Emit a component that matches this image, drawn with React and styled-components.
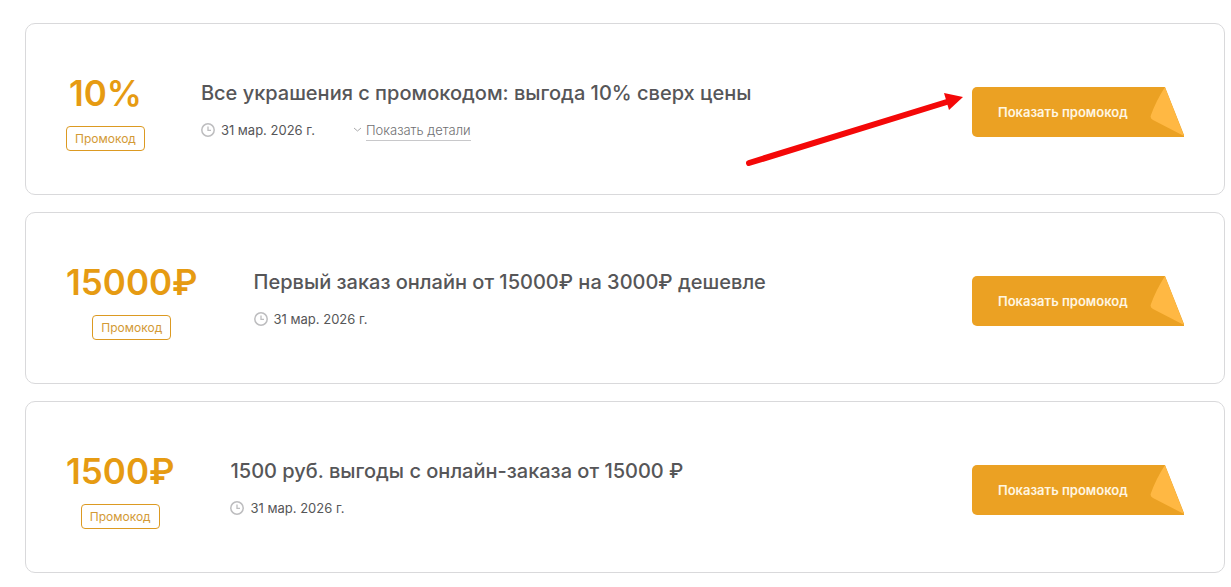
import React from "react";
import styled, { createGlobalStyle } from "styled-components";

const GlobalStyle = createGlobalStyle`
  *,
  *::before,
  *::after {
    box-sizing: border-box;
  }

  body {
    margin: 0;
    background: #fff;
    color: #565658;
    font-family: Inter, "Noto Sans", sans-serif;
  }
`;

const CouponList = styled.main`
  display: flex;
  flex-direction: column;
  gap: 17px;
  padding: 23px 6px 14px 25px;
`;

const Card = styled.article`
  position: relative;
  display: flex;
  align-items: flex-start;
  padding: 50px 40px 43px;
  border: 1px solid #d9d9db;
  border-radius: 10px;
`;

const Discount = styled.div`
  display: flex;
  flex: none;
  flex-direction: column;
  align-items: center;
  gap: 14px;
  margin-right: 56px;
`;

const Amount = styled.div`
  color: #e69b12;
  font-size: 35px;
  font-weight: 600;
  line-height: 38px;
`;

const Badge = styled.span`
  padding: 0 8px;
  border: 1px solid #dc9a22;
  border-radius: 4px;
  color: #d39a35;
  font-size: 12px;
  line-height: 23px;
`;

const Info = styled.div`
  display: flex;
  flex: 1;
  flex-direction: column;
  gap: 12px;
  padding-top: 5px;
`;

const Title = styled.h2`
  margin: 0;
  font-size: 20px;
  font-weight: 500;
  line-height: 28px;
`;

const Meta = styled.div`
  display: flex;
  align-items: center;
  gap: 38px;
  height: 22px;
  font-size: 13px;
  line-height: 20px;
`;

const Expiry = styled.span`
  display: flex;
  align-items: center;
  gap: 6px;
`;

const DetailsButton = styled.button`
  display: flex;
  align-items: center;
  gap: 4px;
  padding: 0;
  border: 0;
  background: none;
  color: #6f6f72;
  font: inherit;
  font-weight: 300;
  cursor: pointer;

  span {
    border-bottom: 1px solid #c8c8ca;
  }
`;

const PromoButton = styled.button`
  display: flex;
  flex: none;
  align-items: center;
  justify-content: space-between;
  width: 212px;
  height: 50px;
  margin-top: 13px;
  padding: 0 0 0 26px;
  overflow: hidden;
  border: 0;
  border-radius: 5px 0 0 5px;
  background: #eba123;
  color: #fff6e2;
  font: inherit;
  font-size: 13px;
  font-weight: 600;
  clip-path: polygon(0 0, calc(100% - 19px) 0, 100% calc(100% - 2px), 100% 100%, 0 100%);
  cursor: pointer;
`;

const Pointer = styled.svg`
  position: absolute;
  top: 66px;
  right: 258px;
  pointer-events: none;
`;

const ClockIcon = () => (
  <svg width="14" height="14" viewBox="0 0 14 14" fill="none" stroke="#bdbdbf">
    <circle cx="7" cy="7" r="6.2" strokeWidth="1.5" />
    <path d="M7 3.4v4h3" strokeWidth="1.3" />
  </svg>
);

const ChevronIcon = () => (
  <svg width="9" height="6" viewBox="0 0 9 6" fill="none" stroke="#aaaaac">
    <path d="M1 1l3.5 3L8 1" />
  </svg>
);

const FoldedCorner = () => (
  <svg width="34" height="50" viewBox="0 0 34 50">
    <path d="M15 0L34 49L3 33Q-.5 31 1 28Q6 14 15 0Z" fill="#ffb843" />
  </svg>
);

const PointerArrow = () => (
  <Pointer width="222" height="80" viewBox="0 0 222 80" aria-hidden="true">
    <path d="M5 73L206 11" stroke="#f40808" strokeWidth="6" strokeLinecap="round" />
    <path d="M200 3L219 7L205 20Z" fill="#f40808" />
  </Pointer>
);

const coupons = [
  {
    amount: "10%",
    title: "Все украшения с промокодом: выгода 10% сверх цены",
    expires: "31 мар. 2026 г.",
    hasDetails: true,
    highlighted: true,
  },
  {
    amount: "15000₽",
    title: "Первый заказ онлайн от 15000₽ на 3000₽ дешевле",
    expires: "31 мар. 2026 г.",
  },
  {
    amount: "1500₽",
    title: "1500 руб. выгоды с онлайн-заказа от 15000 ₽",
    expires: "31 мар. 2026 г.",
  },
];

const Coupon = ({ amount, title, expires, hasDetails, highlighted }) => {
  return (
    <Card>
      <Discount>
        <Amount>{amount}</Amount>
        <Badge>Промокод</Badge>
      </Discount>
      <Info>
        <Title>{title}</Title>
        <Meta>
          <Expiry>
            <ClockIcon />
            {expires}
          </Expiry>
          {hasDetails && (
            <DetailsButton type="button">
              <ChevronIcon />
              <span>Показать детали</span>
            </DetailsButton>
          )}
        </Meta>
      </Info>
      <PromoButton type="button">
        Показать промокод
        <FoldedCorner />
      </PromoButton>
      {highlighted && <PointerArrow />}
    </Card>
  );
};

const App = () => {
  return (
    <>
      <GlobalStyle />
      <CouponList>
        {coupons.map((coupon) => (
          <Coupon key={coupon.amount} {...coupon} />
        ))}
      </CouponList>
    </>
  );
};

export default App;
